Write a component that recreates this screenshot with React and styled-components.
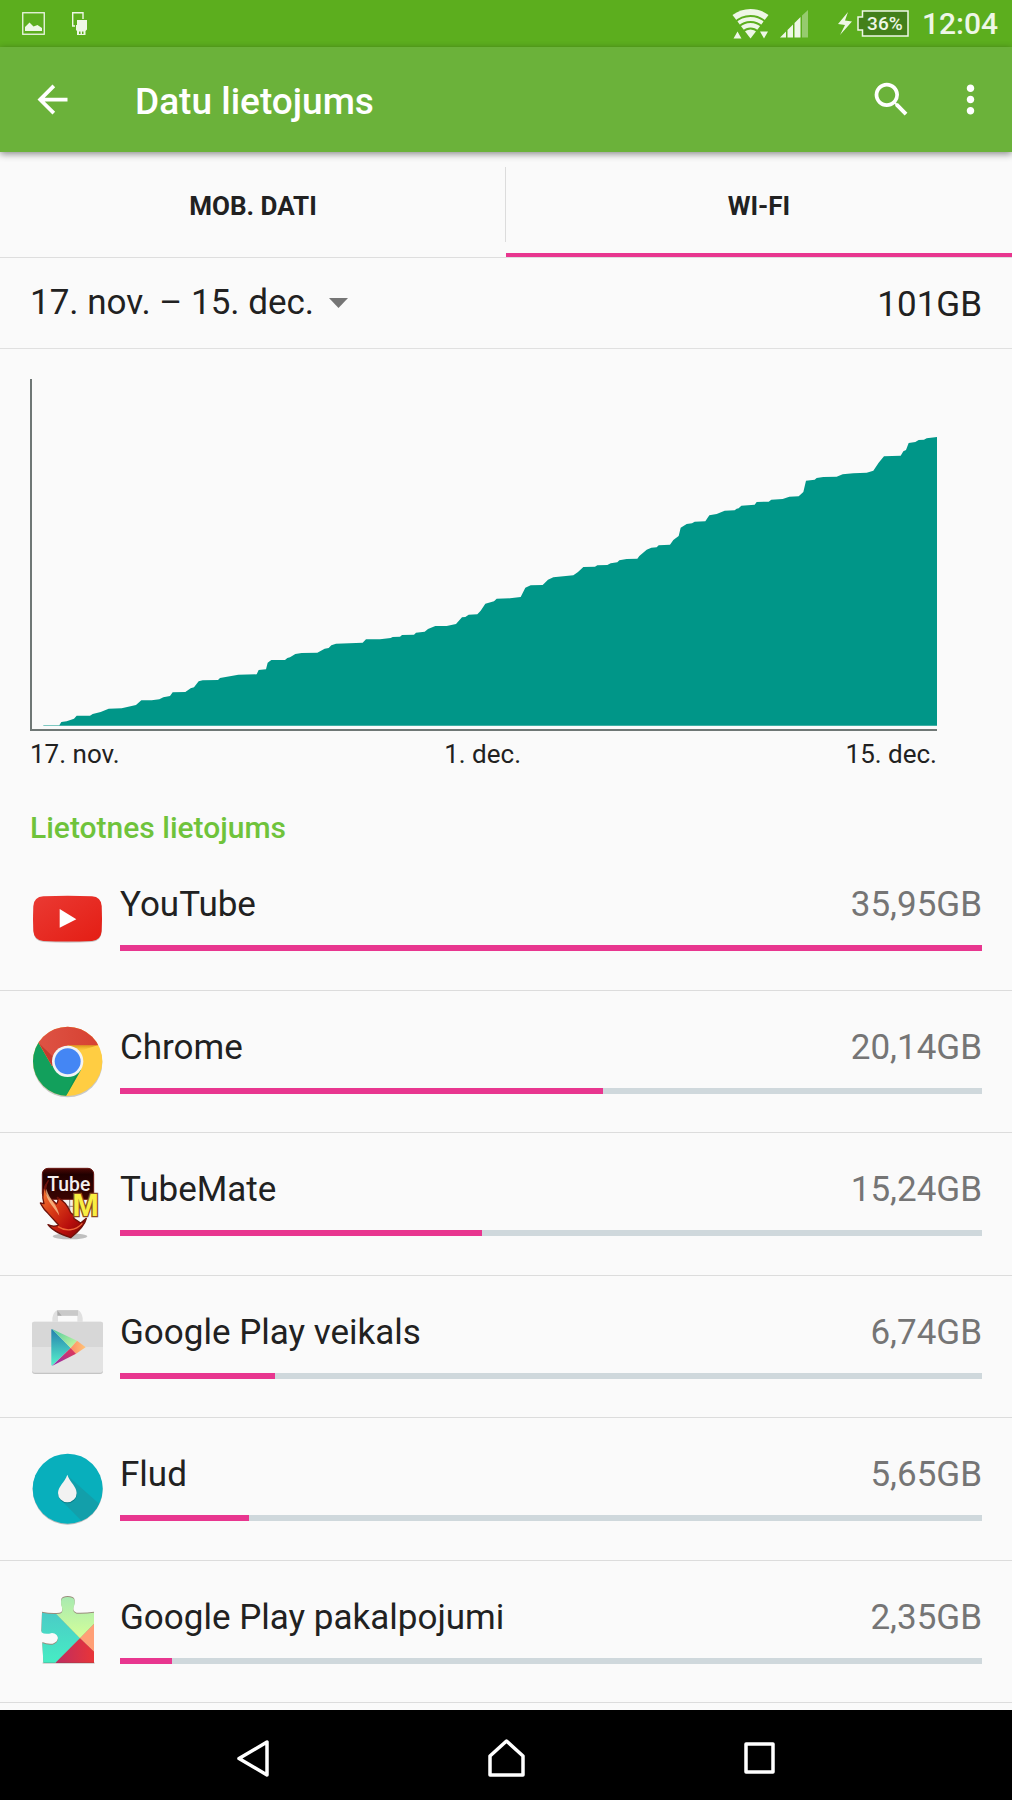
import styled, { createGlobalStyle } from 'styled-components'
import { MdArrowBack, MdSearch, MdMoreVert } from 'react-icons/md'

const GlobalStyle = createGlobalStyle`
  * { box-sizing: border-box; }
  body {
    margin: 0;
    background: #fafafa;
    color: #212121;
    font-family: Roboto, "Noto Sans", sans-serif;
  }
  button, select { font: inherit; color: inherit; border: 0; padding: 0; background: none; }
  svg { display: block; }
`

const Screen = styled.div`
  min-height: 100vh;
  display: flex;
  flex-direction: column;
`

const StatusBar = styled.div`
  height: 47px;
  padding: 0 14px 0 22px;
  display: flex;
  align-items: center;
  justify-content: space-between;
  background: #5cae1e;
  color: #eef7e6;
`

const StatusGroup = styled.div`
  display: flex;
  align-items: center;
  gap: ${p => p.$gap}px;
`

const Battery = styled.span`
  position: relative;
  width: 52px;
  height: 27px;
  padding-left: 4px;
  display: flex;
  align-items: center;
  justify-content: center;
  font-size: 19px;
  font-weight: 500;
  svg { position: absolute; inset: 0; }
  span { position: relative; }
`

const Clock = styled.time`
  font-size: 30px;
  line-height: 47px;
  font-weight: 500;
`

const AppBar = styled.header`
  position: relative;
  height: 105px;
  padding: 0 19px 0 30px;
  display: flex;
  align-items: center;
  background: #6bb23a;
  color: #fff;
  box-shadow: 0 2px 7px rgba(0, 0, 0, 0.45);
`

const Title = styled.h1`
  margin: 0;
  padding: 4px 0 0 60px;
  flex: 1;
  font-size: 37px;
  line-height: 44px;
  font-weight: 500;
`

const IconButton = styled.button`
  margin-left: ${p => p.$gap || 0}px;
  font-size: 45px;
`

const Tabs = styled.div`
  display: flex;
  height: 106px;
  border-bottom: 1px solid #dedede;
`

const Tab = styled.button.attrs({ role: 'tab' })`
  flex: 1;
  display: flex;
  align-items: center;
  justify-content: center;
  padding-top: 6px;
  font-size: 26px;
  line-height: 32px;
  font-weight: 700;
  text-transform: uppercase;
  border-bottom: 4px solid ${p => (p['aria-selected'] ? '#e8368f' : 'transparent')};
`

const TabDivider = styled.div`
  width: 1px;
  margin: 15px 0 15px -1px;
  background: #dcdcdc;
`

const PeriodRow = styled.div`
  height: 91px;
  padding: 0 30px;
  display: flex;
  align-items: center;
  justify-content: space-between;
  border-bottom: 1px solid #e0e0e0;
  font-size: 35px;
  line-height: 42px;
`

const Period = styled.label`
  display: flex;
  align-items: center;
  gap: 14px;
`

const PeriodSelect = styled.select`
  appearance: none;
  line-height: 42px;
`

const Total = styled.span`
  padding-top: 3px;
`

const ChartBox = styled.section`
  padding: 30px 75px 0 30px;
`

const Chart = styled.svg`
  width: 100%;
  height: 352px;
`

const AxisLabels = styled.div`
  display: flex;
  justify-content: space-between;
  padding-top: 7px;
  font-size: 26px;
  line-height: 32px;
`

const SectionTitle = styled.h2`
  margin: 0;
  padding: 40px 30px 0;
  height: 78px;
  font-size: 30px;
  line-height: 36px;
  font-weight: 500;
  color: #6fc33b;
`

const AppList = styled.ul`
  margin: 0;
  padding: 0;
  list-style: none;
`

const AppRow = styled.li`
  display: flex;
  gap: 15px;
  height: 143px;
  padding: 33px 30px 0;
  border-bottom: 1px solid #dcdcdc;
  &:nth-child(even) { height: 142px; }
`

const AppInfo = styled.div`
  flex: 1;
`

const AppText = styled.div`
  display: flex;
  justify-content: space-between;
  padding-top: 2px;
  font-size: 35px;
  line-height: 44px;
`

const Amount = styled.span`
  color: #757575;
`

const Track = styled.div`
  height: 6px;
  margin-top: 18px;
  background: #cfd8dc;
`

const Fill = styled.div`
  height: 100%;
  background: #e8368f;
`

const NavBar = styled.nav`
  height: 90px;
  margin-top: auto;
  padding: 0 12.5%;
  display: flex;
  justify-content: space-around;
  align-items: center;
  background: #000;
`

const NavButton = styled.button`
  width: 45px;
  height: 45px;
`

const usage = `40,1039 88,1039 94,1029 110,1027 132,1019 140,1010 180,1010 188,1005 212,999 236,989
275,988 318,978 334,964 365,964 388,961 400,955 420,951 428,940 466,939 482,928 492,925 506,907
518,904 564,903 570,897 625,887 680,886 686,873 708,871 713,851 724,843 765,843 772,837 780,835
796,825 815,822 862,821 884,809 896,807 904,799 918,794 998,791 1008,781 1050,781 1082,777
1088,774 1110,773 1116,768 1152,767 1158,761 1184,758 1194,750 1216,741 1250,741 1278,735
1296,715 1306,714 1316,707 1342,706 1352,695 1366,674 1392,667 1400,659 1440,658 1472,654
1486,626 1502,619 1538,618 1554,602 1570,595 1630,589 1644,579 1660,564 1695,563 1702,559
1732,558 1742,553 1762,550 1768,544 1790,540 1822,539 1828,531 1850,512 1864,506 1880,505
1886,499 1920,497 1930,483 1946,471 1952,446 1970,435 1986,433 1994,428 2026,427 2038,409
2060,405 2084,395 2114,394 2120,389 2126,388 2134,380 2174,377 2180,369 2216,368 2224,362
2258,360 2278,353 2306,352 2320,339 2328,305 2354,302 2360,297 2380,294 2420,293 2438,286
2470,283 2510,281 2530,275 2546,251 2562,232 2612,230 2620,217 2628,213 2636,192 2656,189
2666,183 2682,182 2690,178 2721,174`

const AppIcon = ({ children }) => (
  <svg width="75" height="75" viewBox="0 0 225 225" aria-hidden="true">{children}</svg>
)

const YouTubeIcon = () => (
  <AppIcon>
    <defs>
      <linearGradient id="yt" x1="0" y1="0" x2="1" y2="1">
        <stop offset="0" stopColor="#ea3a33" />
        <stop offset="1" stopColor="#e41d14" />
      </linearGradient>
    </defs>
    <path d="M40 50Q113 45 186 50Q214 51 215 79Q217 114 215 153Q213 181 186 183Q113 188 40 183Q12 181 11 153Q8 114 11 79Q12 51 40 50Z" fill="#000" opacity=".2" />
    <path d="M40 46Q113 43 186 46Q213 48 215 75Q217 113 215 150Q213 177 186 180Q113 183 40 180Q12 177 10 150Q8 113 10 75Q12 48 40 46Z" fill="url(#yt)" />
    <path d="M89 84V140L139 115Z" fill="#fff" />
  </AppIcon>
)

const ChromeIcon = () => (
  <AppIcon>
    <defs>
      <clipPath id="chc"><circle cx="113" cy="112" r="104" /></clipPath>
      <linearGradient id="chr" x1="0" y1="0" x2="1" y2="0">
        <stop offset="0" stopColor="#df5648" />
        <stop offset="1" stopColor="#d63f2f" />
      </linearGradient>
      <linearGradient id="chs" x1="0" y1="0" x2="0" y2="1">
        <stop offset="0" stopColor="#d99417" />
        <stop offset="1" stopColor="#ffcd42" stopOpacity="0" />
      </linearGradient>
    </defs>
    <circle cx="113" cy="116" r="104" fill="#000" opacity=".2" />
    <g clipPath="url(#chc)">
      <path d="M0 0H225V225H0Z" fill="#ffcd42" />
      <path d="M113 64H203L140 84Z" fill="url(#chs)" />
      <path d="M-7 0V225H103L153 138L113 112L66 126Z" fill="#12a05c" />
      <path d="M146 150L153 138L132 174L108 216L136 155Z" fill="#0b7b45" opacity=".4" />
      <path d="M-7 0H225V64H113V112L66 126Z" fill="url(#chr)" />
      <path d="M27 58L66 126L69 98Z" fill="#a52217" opacity=".45" />
    </g>
    <circle cx="113" cy="112" r="47" fill="#f3f3f3" />
    <circle cx="113" cy="112" r="39" fill="#4486f4" />
  </AppIcon>
)

const TubeMateIcon = () => (
  <AppIcon>
    <defs>
      <linearGradient id="tmb" x1="0" y1="0" x2="0" y2="1">
        <stop offset="0" stopColor="#4d0805" />
        <stop offset=".2" stopColor="#210000" />
        <stop offset="1" stopColor="#3b0402" />
      </linearGradient>
      <linearGradient id="tma" x1="0" y1="0" x2="1" y2="1">
        <stop offset="0" stopColor="#ff8f3c" />
        <stop offset=".4" stopColor="#d83a16" />
        <stop offset=".7" stopColor="#b80e0c" />
        <stop offset="1" stopColor="#710404" />
      </linearGradient>
    </defs>
    <ellipse cx="120" cy="211" rx="52" ry="9" fill="#777" opacity=".45" />
    <path d="M80 98H136V158H103Z" fill="#f4f0ee" />
    <path d="M98 98v48M119 98v58M84 121h46" stroke="#8e8582" strokeWidth="3" />
    <rect x="37" y="7" width="154" height="93" rx="17" fill="url(#tmb)" stroke="#671611" strokeWidth="3" />
    <text x="52" y="75" fontFamily="Roboto, sans-serif" fontSize="58" fontWeight="500" fill="#f4eeee">Tube</text>
    <path d="M55 44C45 60 45 77 55 91C64 101 75 107 79 114C86 106 85 100 82 94C100 102 113 119 122 140L130 146L132 158L152 171L169 157C165 177 146 196 122 215C99 207 69 197 54 176C65 182 76 182 86 177L54 142C40 130 38 123 31 111L42 113C34 90 40 62 55 44Z" fill="url(#tma)" stroke="#6e120b" strokeWidth="4" strokeLinejoin="round" />
    <path d="M49 68C44 101 66 114 88 149C83 116 58 102 49 68Z" fill="#ffd5a0" opacity=".7" />
    <path d="M84 182C105 196 136 196 157 172" fill="none" stroke="#f06838" strokeWidth="4" />
    <text x="127" y="150" fontFamily="'Liberation Sans', sans-serif" fontSize="96" fontWeight="700" fill="#f8ee42" stroke="#8b4c20" strokeWidth="8" paintOrder="stroke">M</text>
  </AppIcon>
)

const PlayStoreIcon = () => (
  <AppIcon>
    <defs>
      <linearGradient id="pst" x1="0" y1="0" x2="0" y2="1">
        <stop offset="0" stopColor="#237fae" />
        <stop offset="1" stopColor="#58f2cb" />
      </linearGradient>
      <linearGradient id="psg" x1="0" y1="0" x2="1" y2="1">
        <stop offset="0" stopColor="#49c79f" />
        <stop offset="1" stopColor="#cefba1" />
      </linearGradient>
      <linearGradient id="psr" x1="1" y1="0" x2="0" y2="1">
        <stop offset="0" stopColor="#ea384d" />
        <stop offset="1" stopColor="#8b30b7" />
      </linearGradient>
      <linearGradient id="pso" x1="0" y1="0" x2="1" y2="0">
        <stop offset="0" stopColor="#ff9166" />
        <stop offset="1" stopColor="#ffc477" />
      </linearGradient>
    </defs>
    <path d="M67 38V27Q70 9 82 3H144Q156 10 158 27V38H142V20H84V38Z" fill="#e0e0e0" />
    <path d="M82 4H144V20H91Z" fill="#c9c9c9" />
    <path d="M82 4V20H95Z" fill="#aaa" />
    <rect x="6" y="42" width="213" height="153" rx="9" fill="#c4c4c4" />
    <rect x="6" y="38" width="213" height="153" rx="7" fill="#e3e3e3" />
    <path d="M6 114V44Q6 38 12 38H213Q219 38 219 44V114Z" fill="#d7d7d7" />
    <path d="M66 60L122 117L66 170Q64 170 64 166V63Q64 60 66 60Z" fill="url(#pst)" />
    <path d="M66 60L141 95L122 117Z" fill="url(#psg)" />
    <path d="M141 95L167 115L138 134L122 117Z" fill="url(#pso)" />
    <path d="M66 171L138 134L122 117Z" fill="url(#psr)" />
  </AppIcon>
)

const FludIcon = () => (
  <AppIcon>
    <clipPath id="flc"><circle cx="113" cy="113" r="105" /></clipPath>
    <circle cx="113" cy="116" r="105" fill="#000" opacity=".25" />
    <circle cx="113" cy="113" r="105" fill="#08afbc" />
    <path d="M113 74L225 174L170 225L92 146Z" fill="#139faa" clipPath="url(#flc)" />
    <path d="M112 74C104 97 84 108 84 128A28 28 0 0 0 141 128C141 108 120 97 112 74Z" fill="#087f8a" />
    <path d="M112 71C104 94 84 106 84 126A28 28 0 0 0 140 126C140 106 120 94 112 71Z" fill="#f2f2f2" />
  </AppIcon>
)

const puzzle = 'M36 56Q64 62 88 59Q99 57 97 44Q91 27 94 17Q98 9 113 9Q129 9 133 17Q136 27 130 43Q128 56 140 59Q166 60 192 56V207H40L37 147Q51 154 68 152Q84 147 84 133Q83 119 66 117Q45 123 34 115Z'

const PlayServicesIcon = () => (
  <AppIcon>
    <defs>
      <clipPath id="svc"><path d={puzzle} /></clipPath>
      <linearGradient id="svt" x1="0" y1="0" x2="0" y2="1">
        <stop offset="0" stopColor="#4cbfc7" />
        <stop offset="1" stopColor="#46edc4" />
      </linearGradient>
      <linearGradient id="svg" x1="0" y1="0" x2="0" y2="1">
        <stop offset="0" stopColor="#a5e8b2" />
        <stop offset="1" stopColor="#d4ff99" />
      </linearGradient>
      <linearGradient id="svr" x1="0" y1="0" x2="1" y2="0">
        <stop offset="0" stopColor="#bd2c62" />
        <stop offset="1" stopColor="#e93538" />
      </linearGradient>
    </defs>
    <path d={puzzle} fill="#9a8c7c" transform="translate(0 -3)" />
    <g clipPath="url(#svc)">
      <path d="M20 0H82V63L150 133L75 208H20Z" fill="url(#svt)" />
      <path d="M78 0H200V82L150 133L78 59Z" fill="url(#svg)" />
      <path d="M192 90V173L150 133Z" fill="#ff9f76" />
      <path d="M150 133L192 173V208H75Z" fill="url(#svr)" />
    </g>
    <path d="M38 207H194" stroke="#5d4c49" strokeWidth="2" opacity=".6" />
  </AppIcon>
)

const apps = [
  { name: 'YouTube', amount: '35,95GB', percent: 100, Icon: YouTubeIcon },
  { name: 'Chrome', amount: '20,14GB', percent: 56, Icon: ChromeIcon },
  { name: 'TubeMate', amount: '15,24GB', percent: 42, Icon: TubeMateIcon },
  { name: 'Google Play veikals', amount: '6,74GB', percent: 18, Icon: PlayStoreIcon },
  { name: 'Flud', amount: '5,65GB', percent: 15, Icon: FludIcon },
  { name: 'Google Play pakalpojumi', amount: '2,35GB', percent: 6, Icon: PlayServicesIcon },
]

function Status() {
  return (
    <StatusBar>
      <StatusGroup $gap={27}>
        <svg width="23" height="23" viewBox="0 0 23 23" fill="currentColor">
          <rect x=".75" y=".75" width="21.5" height="21.5" fill="none" stroke="currentColor" strokeWidth="1.3" />
          <path d="M3 19V15L7.5 10.5L11.5 14.5L15.5 13L20 16V19Z" />
        </svg>
        <svg width="16" height="23" viewBox="0 0 16 23" fill="currentColor">
          <path d="M3 14H.7V.7H11V7" fill="none" stroke="currentColor" strokeWidth="1.4" />
          <path d="M5 8H15V17.5L13.5 19V23H5V19L4 18V13H5ZM7 19.5V22H8.5V19.5ZM10 19.5V22H11.5V19.5Z" fillRule="evenodd" />
        </svg>
      </StatusGroup>
      <StatusGroup $gap={6}>
        <StatusGroup $gap={11}>
          <svg width="37" height="31" viewBox="0 0 37 31" fill="currentColor">
            <path d="M.5 7A29.600 29.600 0 0 1 36.500 7L18.500 30.500Z" />
            <g fill="none" stroke="#5cae1e" strokeWidth="1.800">
              <circle cx="18.500" cy="30.500" r="22.500" />
              <circle cx="18.500" cy="30.500" r="16.500" />
              <circle cx="18.500" cy="30.500" r="10" />
            </g>
            <path d="M1.500 30.500L5.500 23.500L9.500 30.500ZM28 23.500H36L32 30.500Z" />
          </svg>
          <svg width="28" height="28" viewBox="0 0 28 28" fill="currentColor">
            <path d="M0 27.500L6 21.500V27.500ZM7.500 20L13 14.500V27.500H7.500ZM14.500 13L20.500 7V27.500H14.500Z" />
            <path d="M22 5.500L28 0V27.500H22Z" opacity=".4" />
          </svg>
        </StatusGroup>
        <StatusGroup $gap={5}>
          <svg width="38" height="23" viewBox="0 0 38 23" fill="currentColor">
            <path d="M34 0L24 12L31 13L26 23L38 9.500L31 8.500Z" />
          </svg>
          <StatusGroup $gap={13}>
            <Battery>
              <svg width="52" height="27" viewBox="0 0 52 27">
                <path d="M5.500 1H51V26H5.500V20H1V7H5.500Z" fill="#43801a" stroke="#eef7e6" strokeWidth="1.500" />
              </svg>
              <span>36%</span>
            </Battery>
            <Clock>12:04</Clock>
          </StatusGroup>
        </StatusGroup>
      </StatusGroup>
    </StatusBar>
  )
}

export default function App() {
  return (
    <Screen>
      <GlobalStyle />
      <Status />
      <AppBar>
        <IconButton aria-label="Atpakaļ"><MdArrowBack /></IconButton>
        <Title>Datu lietojums</Title>
        <IconButton aria-label="Meklēt"><MdSearch /></IconButton>
        <IconButton $gap={34} aria-label="Vairāk"><MdMoreVert /></IconButton>
      </AppBar>
      <Tabs role="tablist">
        <Tab aria-selected={false}>Mob. dati</Tab>
        <TabDivider />
        <Tab aria-selected>Wi-Fi</Tab>
      </Tabs>
      <PeriodRow>
        <Period>
          <PeriodSelect aria-label="Periods">
            <option>17. nov. – 15. dec.</option>
          </PeriodSelect>
          <svg width="19" height="10" viewBox="0 0 19 10"><path d="M0 0H19L9.500 10Z" fill="#757575" /></svg>
        </Period>
        <Total>101GB</Total>
      </PeriodRow>
      <ChartBox>
        <Chart viewBox="0 0 2721 1056" preserveAspectRatio="none">
          <polygon points={`${usage} 2721,1040 40,1040`} fill="#009688" />
          <path d="M3 0V1053H2721" fill="none" stroke="#6f7775" strokeWidth="6" />
        </Chart>
        <AxisLabels>
          <span>17. nov.</span>
          <span>1. dec.</span>
          <span>15. dec.</span>
        </AxisLabels>
      </ChartBox>
      <SectionTitle>Lietotnes lietojums</SectionTitle>
      <AppList>
        {apps.map(({ name, amount, percent, Icon }) => (
          <AppRow key={name}>
            <Icon />
            <AppInfo>
              <AppText>
                <span>{name}</span>
                <Amount>{amount}</Amount>
              </AppText>
              <Track>
                <Fill style={{ width: `${percent}%` }} />
              </Track>
            </AppInfo>
          </AppRow>
        ))}
      </AppList>
      <NavBar>
        <NavButton aria-label="Atpakaļ">
          <svg width="45" height="45" viewBox="0 0 45 45" fill="none" stroke="#fff" strokeWidth="3.500" strokeLinejoin="round">
            <path d="M36 9V42L8 25.500Z" />
          </svg>
        </NavButton>
        <NavButton aria-label="Sākums">
          <svg width="45" height="45" viewBox="0 0 45 45" fill="none" stroke="#fff" strokeWidth="3.500" strokeLinejoin="round">
            <path d="M6 42V23L22.500 8L39 23V42Z" />
          </svg>
        </NavButton>
        <NavButton aria-label="Pēdējās lietotnes">
          <svg width="45" height="45" viewBox="0 0 45 45" fill="none" stroke="#fff" strokeWidth="3.500" strokeLinejoin="round">
            <rect x="9" y="11" width="27" height="28" />
          </svg>
        </NavButton>
      </NavBar>
    </Screen>
  )
}
